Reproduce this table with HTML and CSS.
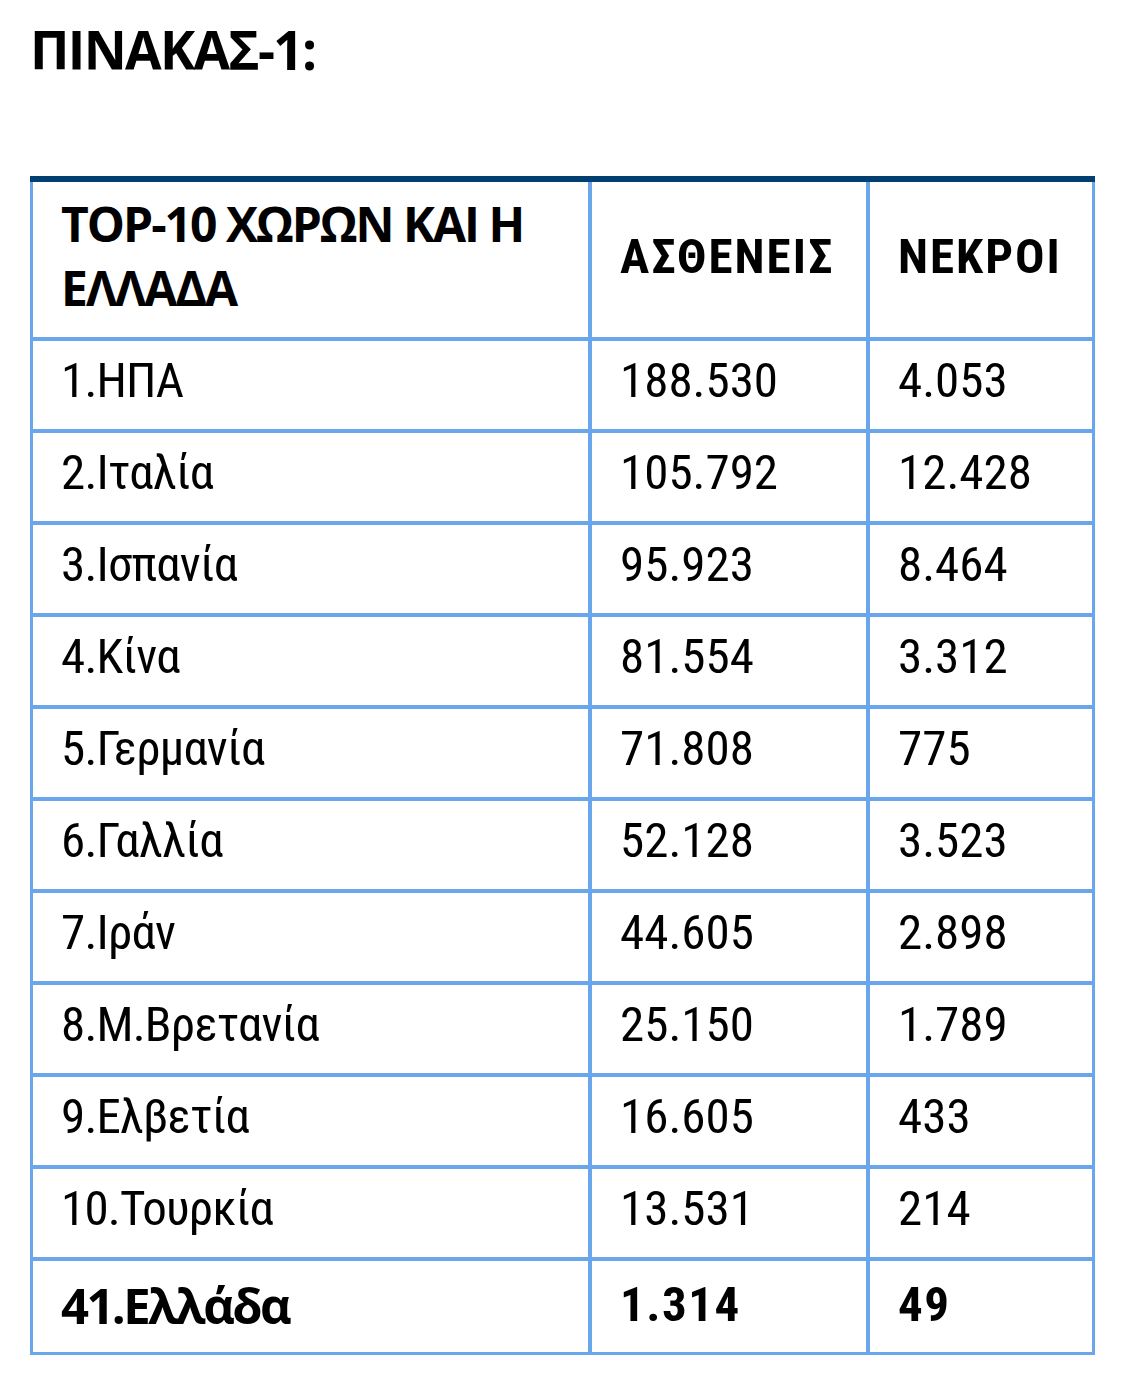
FILE: index.html
```html
<!DOCTYPE html>
<html lang="el">
<head>
<meta charset="utf-8">
<title>ΠΙΝΑΚΑΣ-1</title>
<link rel="stylesheet" href="styles.css">
</head>
<body>
<h1 class="title">ΠΙΝΑΚΑΣ-1:</h1>
<div class="table-wrap">
  <div class="grid">
    <div class="cell head head-main">ΤΟΡ-10 ΧΩΡΩΝ ΚΑΙ Η ΕΛΛΑΔΑ</div>
    <div class="cell head">ΑΣΘΕΝΕΙΣ</div>
    <div class="cell head">ΝΕΚΡΟΙ</div>

    <div class="cell name">1.ΗΠΑ</div><div class="cell">188.530</div><div class="cell">4.053</div>
    <div class="cell name">2.Ιταλία</div><div class="cell">105.792</div><div class="cell">12.428</div>
    <div class="cell name">3.Ισπανία</div><div class="cell">95.923</div><div class="cell">8.464</div>
    <div class="cell name">4.Κίνα</div><div class="cell">81.554</div><div class="cell">3.312</div>
    <div class="cell name">5.Γερμανία</div><div class="cell">71.808</div><div class="cell">775</div>
    <div class="cell name">6.Γαλλία</div><div class="cell">52.128</div><div class="cell">3.523</div>
    <div class="cell name">7.Ιράν</div><div class="cell">44.605</div><div class="cell">2.898</div>
    <div class="cell name">8.Μ.Βρετανία</div><div class="cell">25.150</div><div class="cell">1.789</div>
    <div class="cell name">9.Ελβετία</div><div class="cell">16.605</div><div class="cell">433</div>
    <div class="cell name">10.Τουρκία</div><div class="cell">13.531</div><div class="cell">214</div>
    <div class="cell total total-name">41.Ελλάδα</div><div class="cell total">1.314</div><div class="cell total">49</div>
  </div>
</div>
</body>
</html>
```

FILE: styles.css
```css
html, body {
  margin: 0;
  padding: 0;
  background: #ffffff;
  color: #000000;
}

body {
  width: 1125px;
  font-family: Roboto, "Noto Sans", sans-serif;
}

.title {
  margin: 0;
  padding: 20px 0 0 30px;
  height: 176px;
  box-sizing: border-box;
  font-family: "Open Sans", "Noto Sans", sans-serif;
  font-size: 53px;
  font-weight: 700;
  line-height: 60px;
  letter-spacing: -1.7px;
}

.table-wrap {
  margin-left: 30px;
  width: 1065px;
  border-top: 6px solid #003f70;
}

.grid {
  display: grid;
  grid-template-columns: 555px 274px 222px;
  grid-template-rows: 155px repeat(10, 88px) 91px;
  gap: 4px;
  background: #6aa6ec;
  border: 3px solid #6aa6ec;
  border-top: 0;
}

.cell {
  background: #ffffff;
  display: flex;
  align-items: center;
  box-sizing: border-box;
  padding: 0 16px 9px 28px;
  font-family: Roboto, "Noto Sans", sans-serif;
  font-stretch: condensed;
  font-size: 49px;
  line-height: 64px;
}

.name {
  letter-spacing: -0.8px;
}

.head {
  font-weight: 700;
  padding-bottom: 5px;
  letter-spacing: 2px;
}

.head-main {
  font-family: "Open Sans", "Noto Sans", sans-serif;
  font-stretch: normal;
  font-size: 48px;
  padding-bottom: 8px;
  letter-spacing: -2px;
}

.total {
  font-weight: 700;
  padding-bottom: 3px;
  letter-spacing: 1.5px;
}

.total-name {
  font-family: "Open Sans", "Noto Sans", sans-serif;
  font-stretch: normal;
  letter-spacing: -2.6px;
}
```
